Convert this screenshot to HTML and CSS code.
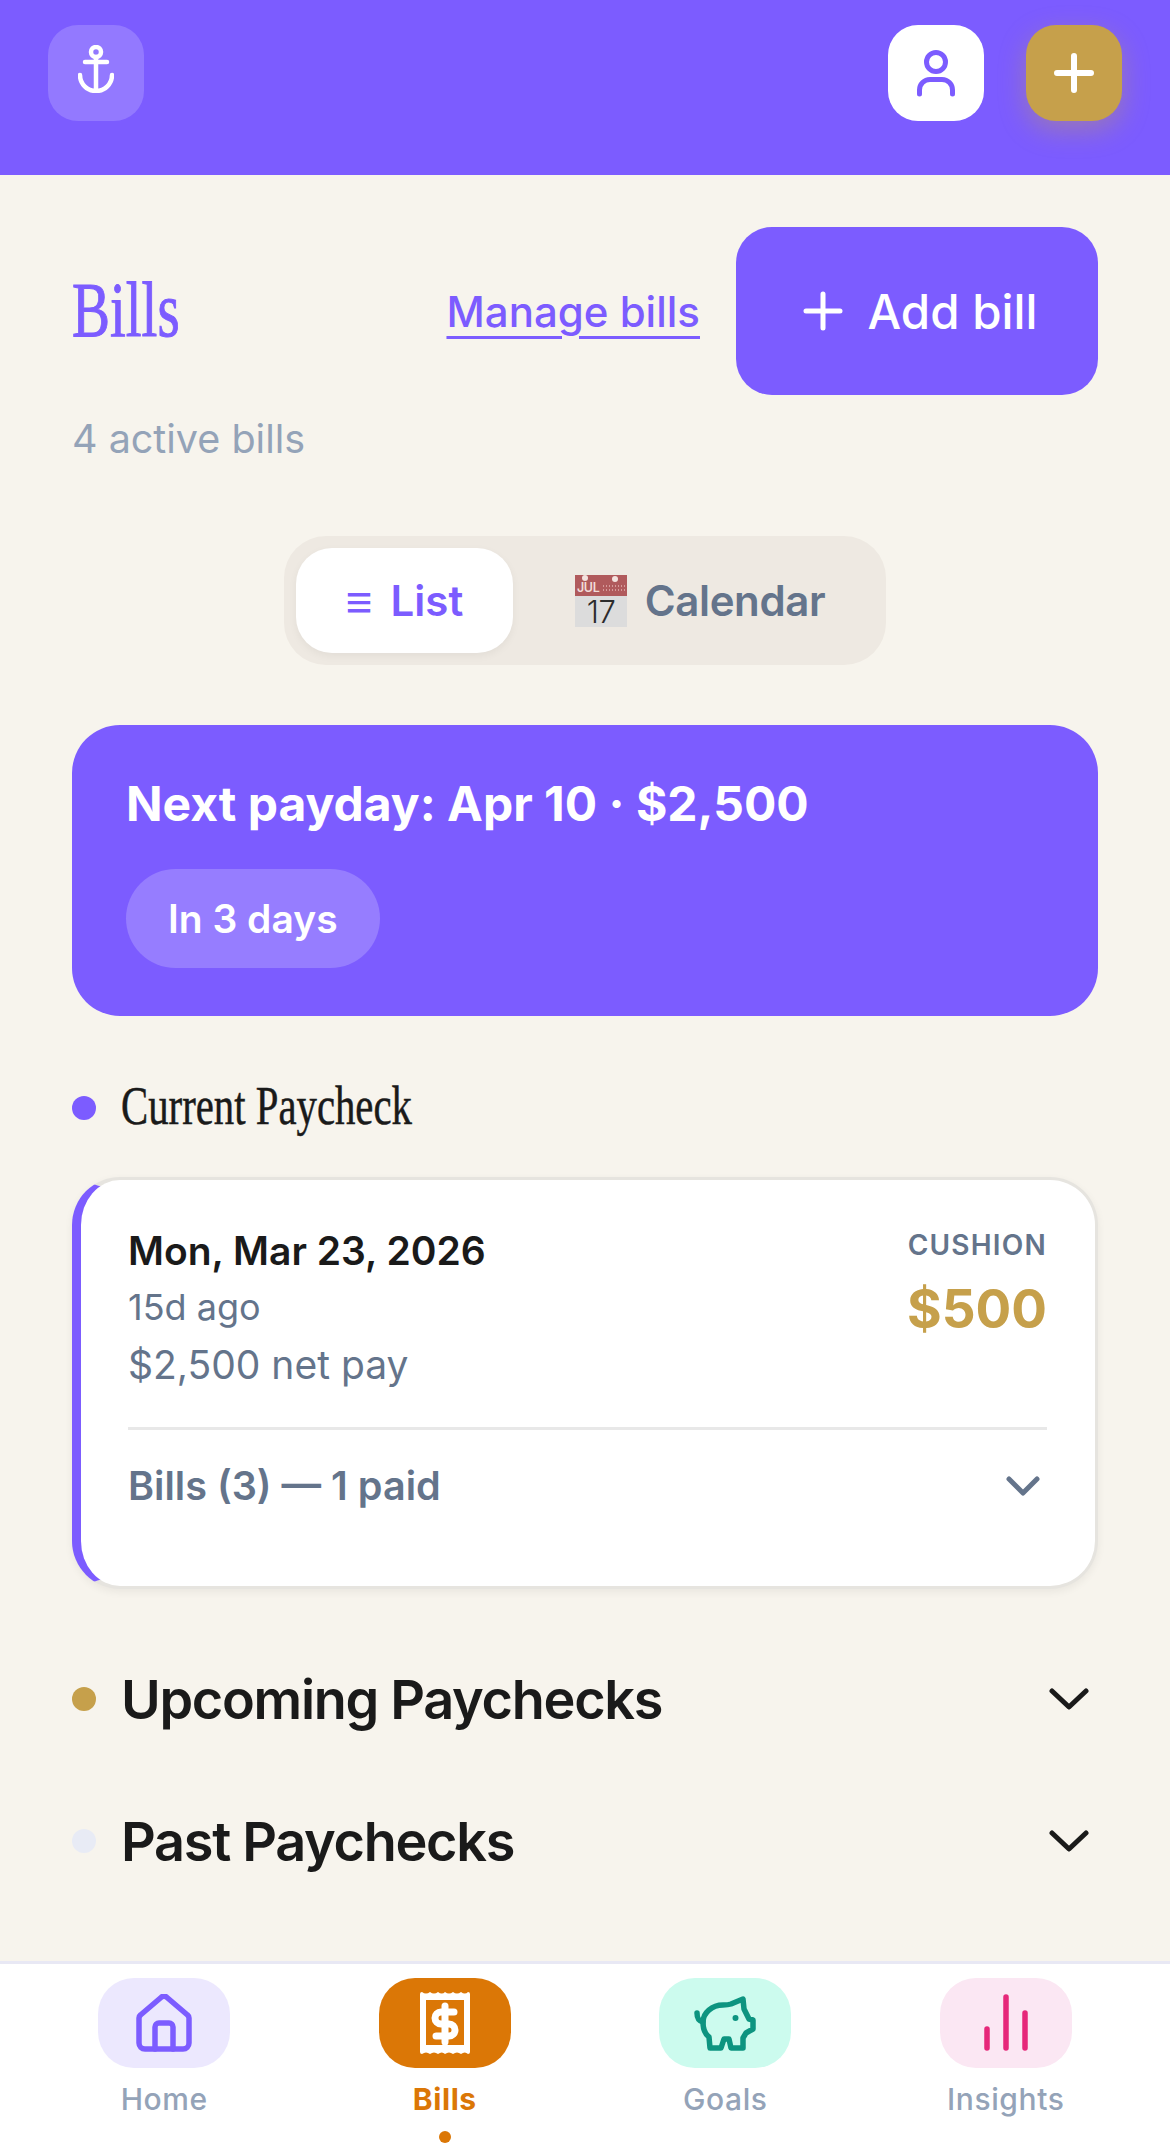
FILE: index.html
```html
<!DOCTYPE html>
<html lang="en">
<head>
    <meta charset="UTF-8">
    <meta name="viewport" content="width=device-width, initial-scale=1.0">
    <title>Bills</title>
    <link rel="stylesheet" href="styles.css">
</head>
<body>
<div class="app">
    <header class="topBar">
        <div class="iconBtn iconBtnGhost">
            <svg class="anchorIcon" width="36" height="48" viewBox="0 0 36 48" fill="none" stroke="#fff" stroke-width="4.5" stroke-linecap="round">
                <circle cx="18" cy="7" r="5"/>
                <path d="M7 17H29M18 12V46M2 30A16 16 0 0 0 34 30"/>
            </svg>
        </div>
        <div class="topActions">
            <div class="iconBtn iconBtnWhite">
                <svg width="42" height="50" viewBox="0 0 42 50" fill="none" stroke="#7c5cff" stroke-width="5" stroke-linecap="round">
                    <circle cx="21" cy="14" r="9.5"/>
                    <path d="M4.500 46V42A10.500 10.500 0 0 1 15 31.500H27A10.500 10.500 0 0 1 37.500 42V46"/>
                </svg>
            </div>
            <div class="iconBtn iconBtnGold">
                <svg width="40" height="40" viewBox="0 0 40 40" fill="none" stroke="#fff" stroke-width="6" stroke-linecap="round">
                    <path d="M20 3V37M3 20H37"/>
                </svg>
            </div>
        </div>
    </header>

    <main class="content">
        <section class="titleRow">
            <h1 class="pageTitle"><span>Bills</span></h1>
            <a class="manageLink" href="#">Manage bills</a>
            <button class="addBtn">
                <svg width="40" height="40" viewBox="0 0 40 40" fill="none" stroke="#fff" stroke-width="5" stroke-linecap="round">
                    <path d="M20 3V37M3 20H37"/>
                </svg>
                Add bill
            </button>
        </section>
        <p class="subtitle">4 active bills</p>

        <div class="toggleWrap">
            <div class="toggle">
                <div class="toggleItem toggleActive"><span class="menuGlyph">≡</span> List</div>
                <div class="toggleItem toggleCalendar">
                    <svg class="calIcon" width="54" height="60" viewBox="0 0 54 60">
                        <rect x="1" y="1" width="52" height="21" fill="#b05a5c"/>
                        <rect x="1" y="22" width="52" height="31" fill="#dcdcdc"/>
                        <circle cx="11" cy="4" r="3" fill="#f3e3df"/>
                        <circle cx="41" cy="5" r="3" fill="#f3e3df"/>
                        <text x="3" y="18" font-family="Inter" font-size="12.500" fill="#f0dcd9">JUL</text>
                        <path d="M29 12H51M29 16H51" stroke="#d69a9a" stroke-width="2" stroke-dasharray="1 2"/>
                        <text x="27" y="49" text-anchor="middle" font-family="Inter" font-size="31" font-weight="300" fill="#2c2c2c">17</text>
                    </svg>
                    Calendar
                </div>
            </div>
        </div>

        <section class="paydayCard">
            <div class="paydayTitle">Next payday: Apr 10 · $2,500</div>
            <span class="paydayPill">In 3 days</span>
        </section>

        <div class="serifHeading">
            <span class="dot dotViolet"></span>
            <h2><span>Current Paycheck</span></h2>
        </div>

        <section class="payCard">
            <div class="payTop">
                <div>
                    <div class="payDate">Mon, Mar 23, 2026</div>
                    <div class="payAgo">15d ago</div>
                    <div class="payNet">$2,500 net pay</div>
                </div>
                <div class="cushion">
                    <div class="cushionLabel">CUSHION</div>
                    <div class="cushionValue">$500</div>
                </div>
            </div>
            <div class="payBills">
                <span>Bills (3) — 1 paid</span>
                <svg width="34" height="20" viewBox="0 0 34 20" fill="none" stroke="#64748b" stroke-width="5" stroke-linecap="round" stroke-linejoin="round">
                    <path d="M3 3L17 17L31 3"/>
                </svg>
            </div>
        </section>

        <div class="groupRow">
            <span class="dot dotGold"></span>
            <h2>Upcoming Paychecks</h2>
            <svg width="40" height="24" viewBox="0 0 40 24" fill="none" stroke="#1a1a1a" stroke-width="5" stroke-linecap="round" stroke-linejoin="round">
                <path d="M3 4L20 20L37 4"/>
            </svg>
        </div>
        <div class="groupRow">
            <span class="dot dotPale"></span>
            <h2>Past Paychecks</h2>
            <svg width="40" height="24" viewBox="0 0 40 24" fill="none" stroke="#1a1a1a" stroke-width="5" stroke-linecap="round" stroke-linejoin="round">
                <path d="M3 4L20 20L37 4"/>
            </svg>
        </div>
    </main>

    <nav class="bottomNav">
        <a class="navItem" href="#">
            <span class="navIcon navHome">
                <svg width="56" height="58" viewBox="0 0 56 58" fill="none" stroke="#7c5cff" stroke-width="5.5" stroke-linecap="round" stroke-linejoin="round">
                    <path d="M3 24A4 4 0 0 1 4.5 21L25 3.5A4 4 0 0 1 31 3.5L51.500 21A4 4 0 0 1 53 24V49A6 6 0 0 1 47 55H9A6 6 0 0 1 3 49Z"/>
                    <path d="M19 55V33A4 4 0 0 1 23 29H33A4 4 0 0 1 37 33V55"/>
                </svg>
            </span>
            <span class="navLabel">Home</span>
        </a>
        <a class="navItem navActive" href="#">
            <span class="navIcon navBills">
                <svg width="52" height="64" viewBox="0 0 52 64">
                    <path fill="#fff" d="M1 3Q1 1 3 1Q7 4 11 1Q15 4 19 1Q23 4 26 1Q30 4 34 1Q38 4 42 1Q46 4 49 1Q51 1 51 3V61Q51 63 49 63Q46 60 42 63Q38 60 34 63Q30 60 26 63Q23 60 19 63Q15 60 11 63Q7 60 3 63Q1 63 1 61Z"/>
                    <rect x="7" y="9" width="38" height="45" fill="#db7706"/>
                    <path d="M35 21H22A6 6 0 0 0 22 33H30A6 6 0 0 1 30 45H17M26 15V51" fill="none" stroke="#fff" stroke-width="7" stroke-linecap="round"/>
                </svg>
            </span>
            <span class="navLabel">Bills</span>
            <span class="navDot"></span>
        </a>
        <a class="navItem" href="#">
            <span class="navIcon navGoals">
                <svg width="62" height="55" viewBox="0 0 62 55" fill="none" stroke="#0d9480" stroke-width="5.500" stroke-linecap="round" stroke-linejoin="round">
                    <path d="M3 17C3 23 5 25 9 26"/>
                    <path d="M9 26C9 17 18 9 29 9C32 9 34 9 37 8L49 3L50 13L55 23L59 24V33L52 37L49 42V52H37L35 43H30L27 52H16L15 41C11 38 9 32 9 26Z"/>
                    <circle cx="41.500" cy="22" r="1.500" fill="#0d9480" stroke-width="3"/>
                </svg>
            </span>
            <span class="navLabel">Goals</span>
        </a>
        <a class="navItem" href="#">
            <span class="navIcon navInsights">
                <svg width="50" height="58" viewBox="0 0 50 58" fill="none" stroke="#e6287a" stroke-width="5.500" stroke-linecap="round">
                    <path d="M6 35V54M25 3V54M44 19V54"/>
                </svg>
            </span>
            <span class="navLabel">Insights</span>
        </a>
    </nav>
</div>
</body>
</html>
```

FILE: styles.css
```css
* {
    box-sizing: border-box;
}

body {
    margin: 0;
    padding: 0;
    background-color: #f7f4ed;
    font-family: Inter, "Liberation Sans", sans-serif;
}

h1, h2, p {
    margin: 0;
    font-weight: normal;
}

a {
    text-decoration: none;
}

.app {
    display: flex;
    flex-direction: column;
    width: 1170px;
    height: 2153px;
    overflow: hidden;
}

/* Top bar */
.topBar {
    display: flex;
    justify-content: space-between;
    align-items: flex-start;
    height: 175px;
    padding: 25px 48px 0;
    background-color: #7c5cff;
}

.topActions {
    display: flex;
    gap: 42px;
}

.iconBtn {
    display: flex;
    justify-content: center;
    align-items: center;
    width: 96px;
    height: 96px;
    border-radius: 30px;
}

.iconBtnGhost {
    background-color: #9379ff;
}

.iconBtnWhite {
    background-color: #fff;
}

.iconBtnGold {
    background-color: #c6a04b;
    box-shadow: 0 9px 27px rgba(198, 160, 75, 0.4);
}

.anchorIcon {
    margin-bottom: 8px;
}

/* Content */
.content {
    flex: 1;
    padding: 52px 72px 0;
}

.titleRow {
    display: flex;
    align-items: center;
    gap: 36px;
}

.pageTitle {
    flex: 1;
    padding-bottom: 3px;
    font-family: "Liberation Serif", serif;
    font-size: 78px;
    color: #7c5cff;
    -webkit-text-stroke: 1px #7c5cff;
}

.pageTitle span,
.serifHeading h2 span {
    display: inline-block;
    transform-origin: left center;
}

.pageTitle span {
    transform: scaleX(0.73);
}

.manageLink {
    color: #7c5cff;
    font-size: 42px;
    font-weight: 500;
    text-decoration: underline;
    text-decoration-thickness: 3px;
    text-underline-offset: 9px;
}

.addBtn {
    display: flex;
    justify-content: center;
    align-items: center;
    gap: 25px;
    width: 362px;
    height: 168px;
    padding-left: 12px;
    border: none;
    border-radius: 36px;
    background-color: #7c5cff;
    color: #fff;
    font-family: inherit;
    font-size: 47.5px;
    font-weight: 500;
}

.subtitle {
    margin-top: 20px;
    color: #94a3b8;
    font-size: 39.5px;
    line-height: 48px;
}

.toggleWrap {
    display: flex;
    justify-content: center;
    margin-top: 73px;
}

.toggle {
    display: flex;
    align-items: center;
    width: 602px;
    height: 129px;
    padding: 12px;
    border-radius: 42px;
    background-color: #eee9e2;
}

.toggleItem {
    display: flex;
    justify-content: center;
    align-items: center;
    gap: 17px;
    flex: 1;
    height: 105px;
    color: #64748b;
    font-size: 42px;
    font-weight: 600;
    letter-spacing: -0.4px;
}

.toggleCalendar {
    padding-left: 12px;
}

.calIcon {
    margin-top: 6px;
}

.toggleActive {
    flex: 0 0 217px;
    gap: 18px;
    border-radius: 36px;
    background-color: #fff;
    color: #7c5cff;
    letter-spacing: 0;
    box-shadow: 0 3px 9px rgba(0, 0, 0, 0.05);
}

.menuGlyph {
    font-size: 46px;
    font-weight: 400;
}

.paydayCard {
    margin-top: 60px;
    height: 291px;
    padding: 50px 54px 0;
    border-radius: 48px;
    background-color: #7c5cff;
    color: #fff;
}

.paydayTitle {
    font-size: 48px;
    font-weight: 700;
    line-height: 58px;
}

.paydayPill {
    display: inline-block;
    margin-top: 36px;
    padding: 0 42px;
    border-radius: 50px;
    background-color: #967dff;
    font-size: 39px;
    font-weight: 600;
    line-height: 99px;
}

.dot {
    flex: none;
    width: 24px;
    height: 24px;
    border-radius: 50%;
}

.dotViolet {
    background-color: #7c5cff;
}

.dotGold {
    background-color: #c6a04b;
}

.dotPale {
    background-color: #e8ebf5;
}

.serifHeading {
    display: flex;
    align-items: center;
    gap: 25px;
    margin-top: 62px;
    height: 60px;
}

.serifHeading h2 {
    padding-bottom: 4px;
    font-family: "Liberation Serif", serif;
    font-size: 54px;
    color: #1a1a1a;
    -webkit-text-stroke: 0.5px #1a1a1a;
}

.serifHeading h2 span {
    transform: scaleX(0.755);
}

.payCard {
    height: 412px;
    margin-top: 39px;
    padding: 47px 48px 0 47px;
    border: 3px solid #e6e4df;
    border-left: 9px solid #7c5cff;
    border-radius: 48px;
    background-color: #fff;
    box-shadow: 0 3px 9px rgba(0, 0, 0, 0.06);
}

.payTop {
    display: flex;
    justify-content: space-between;
    height: 203px;
    border-bottom: 3px solid #e8e8e8;
}

.payDate {
    color: #1a1a1a;
    font-size: 39px;
    font-weight: 600;
    line-height: 48px;
}

.payAgo {
    margin-top: 10px;
    color: #64748b;
    font-size: 36px;
    line-height: 44px;
}

.payNet {
    margin-top: 12px;
    color: #64748b;
    font-size: 39px;
    line-height: 48px;
}

.cushion {
    text-align: right;
}

.cushionLabel {
    color: #64748b;
    font-size: 28px;
    font-weight: 600;
    letter-spacing: 1.2px;
    line-height: 36px;
}

.cushionValue {
    margin-top: 14px;
    color: #c6a04b;
    font-size: 53px;
    font-weight: 700;
    line-height: 64px;
}

.payBills {
    display: flex;
    justify-content: space-between;
    align-items: center;
    margin-top: 32px;
    padding-right: 7px;
    color: #64748b;
    font-size: 39.6px;
    font-weight: 600;
    line-height: 48px;
}

.groupRow {
    display: flex;
    align-items: center;
    gap: 25px;
    height: 70px;
    padding-right: 9px;
    color: #1a1a1a;
}

.groupRow h2 {
    flex: 1;
    font-size: 54px;
    font-weight: 600;
    letter-spacing: -1.3px;
}

.payCard + .groupRow {
    margin-top: 75px;
}

.groupRow + .groupRow {
    margin-top: 72px;
}

/* Bottom navigation */
.bottomNav {
    display: grid;
    grid-template-columns: repeat(4, 1fr);
    height: 192px;
    padding: 14px 24px 0;
    border-top: 3px solid #e8e8f4;
    background-color: #fff;
}

.navItem {
    display: flex;
    flex-direction: column;
    align-items: center;
    color: #94a3b8;
}

.navIcon {
    display: flex;
    justify-content: center;
    align-items: center;
    width: 132px;
    height: 90px;
    border-radius: 36px;
}

.navHome {
    background-color: #ece8fe;
}

.navBills {
    background-color: #db7706;
}

.navGoals {
    background-color: #ccfbee;
}

.navInsights {
    background-color: #fbe7f3;
}

.navLabel {
    margin-top: 12px;
    font-size: 30px;
    font-weight: 500;
    letter-spacing: 0.6px;
    line-height: 38px;
}

.navActive {
    color: #db7706;
}

.navActive .navLabel {
    font-weight: 700;
}

.navDot {
    width: 12px;
    height: 12px;
    margin-top: 13px;
    border-radius: 50%;
    background-color: #db7706;
}
```
